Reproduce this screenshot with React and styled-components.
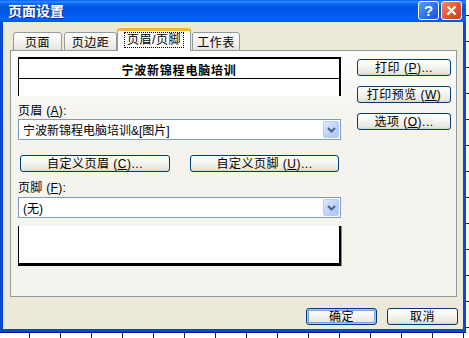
import React from 'react';
import styled, { createGlobalStyle } from 'styled-components';

const GlobalStyle = createGlobalStyle`
  html, body {
    margin: 0;
    padding: 0;
    overflow: hidden;
    background: #fff;
  }
  * {
    box-sizing: border-box;
  }
`;

const FONT = `"Liberation Sans", "Noto Sans CJK SC", sans-serif`;

const Sheet = styled.div`
  width: 469px;
  height: 338px;
  background-color: #fff;
  background-image: linear-gradient(to right, transparent 30px, #222 30px),
    linear-gradient(to bottom, transparent 25px, #222 25px);
  background-size: 31px 26px, 31px 26px;
  background-position: -1px 0, 0 -10px;
  font-family: ${FONT};
  font-size: 12px;
  color: #000;
`;

const Dialog = styled.div`
  width: 466px;
  height: 333px;
  display: flex;
  flex-direction: column;
  background: #0846d8;
  border-bottom: 1px solid #00138c;
`;

const TitleBar = styled.div`
  height: 22px;
  flex: none;
  display: flex;
  align-items: center;
  padding: 0 4px 2px 8px;
  background: linear-gradient(
    to bottom,
    #0a5ef0 0%,
    #2a8aff 8%,
    #0c6cf8 16%,
    #0058e6 30%,
    #0056e8 60%,
    #045ff2 75%,
    #0466f8 85%,
    #0057e0 100%
  );
`;

const Title = styled.div`
  flex: 1;
  color: #fff;
  font-family: "Noto Sans CJK SC", sans-serif;
  font-weight: bold;
  font-size: 14px;
  line-height: 16px;
  text-shadow: 1px 1px 0 #0a2a8a;
`;

const TitleButton = styled.div`
  width: 21px;
  height: 19px;
  margin-left: 2px;
  border: 1px solid #fff;
  border-radius: 3px;
  display: flex;
  align-items: center;
  justify-content: center;
  background: ${({ $close }) =>
    $close
      ? 'linear-gradient(135deg, #f08a6a, #e2552f 55%, #c9401b)'
      : 'linear-gradient(135deg, #5d9cff, #2a6ff0 55%, #1b55d8)'};
  color: #fff;
  font-weight: bold;
  font-size: 15px;
  line-height: 1;
`;

const Body = styled.div`
  flex: 1;
  margin: 0 3px 3px;
  background: #ece9d8;
  display: flex;
  flex-direction: column;
`;

const TabRow = styled.div`
  display: flex;
  align-items: flex-end;
  height: 29px;
  margin-bottom: -1px;
  padding-left: 10px;
  position: relative;
  z-index: 1;
`;

const Tab = styled.div`
  width: ${({ $w }) => $w}px;
  margin-left: ${({ $ml }) => $ml || 0}px;
  height: ${({ $active }) => ($active ? 23 : 19)}px;
  border: 1px solid #919b9c;
  border-bottom: ${({ $active }) => ($active ? 'none' : '1px solid #919b9c')};
  border-top: ${({ $active }) => ($active ? '3px solid #f7b33a' : '1px solid #919b9c')};
  border-radius: 3px 3px 0 0;
  background: ${({ $active }) =>
    $active ? '#fcfcfb' : 'linear-gradient(to bottom, #fefefe, #f2f1ec 60%, #e6e4da)'};
  display: flex;
  align-items: center;
  justify-content: center;
  padding-bottom: ${({ $active }) => ($active ? 2 : 0)}px;
  white-space: nowrap;
  letter-spacing: 0.5px;
`;

const Focus = styled.span`
  outline: 1px dotted #000;
  outline-offset: 0;
  padding: 0 2px;
  line-height: 14px;
`;

const Panel = styled.div`
  margin-left: 7px;
  width: 447px;
  height: 247px;
  border: 1px solid #919b9c;
  background: linear-gradient(to bottom, #fcfcfb, #f4f3ee 30%);
  display: flex;
  padding: 6px 0 0 7px;
`;

const LeftCol = styled.div`
  width: 323px;
  display: flex;
  flex-direction: column;
`;

const RightCol = styled.div`
  margin-left: 16px;
  padding-top: 2px;
  display: flex;
  flex-direction: column;
  gap: 10px;
`;

const Preview = styled.div`
  height: ${({ $h }) => $h}px;
  flex: none;
  background: #fff;
  border-left: 1px solid #000;
  border-right: 2px solid #000;
  border-top: ${({ $top }) => ($top ? '2px solid #000' : 'none')};
  border-bottom: ${({ $bottom }) => ($bottom ? '3px solid #000' : 'none')};
  box-shadow: ${({ $bottom }) => ($bottom ? '1px 0 0 #888' : 'none')};
`;

const PreviewLine = styled.div`
  height: 20px;
  border-bottom: 1px solid #000;
  display: flex;
  align-items: center;
  justify-content: center;
  font-weight: bold;
  padding-top: 1px;
  letter-spacing: 0.8px;
`;

const Label = styled.div`
  line-height: 14px;
  padding: ${({ $top }) => $top}px 0 ${({ $bottom }) => $bottom}px 0;
  letter-spacing: 0.3px;
`;

const Combo = styled.div`
  height: 21px;
  flex: none;
  border: 1px solid #7f9db9;
  background: #fff;
  display: flex;
  align-items: center;
  padding: 1px 1px 1px 4px;
`;

const ComboText = styled.div`
  flex: 1;
  white-space: nowrap;
`;

const DropButton = styled.div`
  width: 16px;
  height: 17px;
  border: 1px solid #b7cbf7;
  border-radius: 2px;
  background: linear-gradient(135deg, #dfe9ff, #bccffa 60%, #aec5f7);
  display: flex;
  align-items: center;
  justify-content: center;
`;

const Button = styled.div`
  width: ${({ $w }) => $w}px;
  height: 17px;
  flex: none;
  border: 1px solid #003c74;
  border-radius: 3px;
  background: linear-gradient(to bottom, #ffffff, #f3f3ef 50%, #e9e7de 85%, #d8d4c8);
  box-shadow: ${({ $default }) =>
    $default ? 'inset 0 0 0 1px #a9c6f7, inset 0 0 0 2px #7ba2e7' : 'none'};
  display: flex;
  align-items: center;
  justify-content: center;
  white-space: nowrap;
  letter-spacing: 0.5px;
  line-height: 14px;
`;

const ButtonRow = styled.div`
  display: flex;
  gap: ${({ $gap }) => $gap}px;
  margin-top: ${({ $mt }) => $mt}px;
  padding-left: ${({ $pl }) => $pl || 0}px;
  justify-content: ${({ $end }) => ($end ? 'flex-end' : 'flex-start')};
  padding-right: ${({ $pr }) => $pr || 0}px;
`;

const Spacer = styled.div`
  height: ${({ $h }) => $h}px;
  flex: none;
`;

const Key = styled.u`
  text-underline-offset: 1px;
`;

function Chevron() {
  return (
    <svg width="9" height="6" viewBox="0 0 9 6">
      <path d="M1 1 L4.5 4.5 L8 1" fill="none" stroke="#4d6185" strokeWidth="2" />
    </svg>
  );
}

export default function App() {
  return (
    <>
      <GlobalStyle />
      <Sheet>
        <Dialog>
          <TitleBar>
            <Title>页面设置</Title>
            <TitleButton>?</TitleButton>
            <TitleButton $close>
              <svg width="11" height="11" viewBox="0 0 11 11">
                <path d="M1.5 1.5 L9.5 9.5 M9.5 1.5 L1.5 9.5" stroke="#fff" strokeWidth="2.2" />
              </svg>
            </TitleButton>
          </TitleBar>
          <Body>
            <TabRow>
              <Tab $w={49}>页面</Tab>
              <Tab $w={53} $ml={2}>页边距</Tab>
              <Tab $w={74} $active>
                <Focus>页眉/页脚</Focus>
              </Tab>
              <Tab $w={48} $ml={1}>工作表</Tab>
            </TabRow>
            <Panel>
              <LeftCol>
                <Preview $h={39} $top>
                  <PreviewLine>宁波新锦程电脑培训</PreviewLine>
                </Preview>
                <Label $top={8} $bottom={1}>
                  页眉 (<Key>A</Key>):
                </Label>
                <Combo>
                  <ComboText>宁波新锦程电脑培训&amp;[图片]</ComboText>
                  <DropButton>
                    <Chevron />
                  </DropButton>
                </Combo>
                <ButtonRow $gap={20} $mt={15} $pl={2}>
                  <Button $w={150}>
                    自定义页眉 (<Key>C</Key>)...
                  </Button>
                  <Button $w={149}>
                    自定义页脚 (<Key>U</Key>)...
                  </Button>
                </ButtonRow>
                <Label $top={9} $bottom={2}>
                  页脚 (<Key>F</Key>):
                </Label>
                <Combo>
                  <ComboText>(无)</ComboText>
                  <DropButton>
                    <Chevron />
                  </DropButton>
                </Combo>
                <Spacer $h={8} />
                <Preview $h={40} $bottom />
              </LeftCol>
              <RightCol>
                <Button $w={94}>
                  打印 (<Key>P</Key>)...
                </Button>
                <Button $w={94}>
                  打印预览 (<Key>W</Key>)
                </Button>
                <Button $w={94}>
                  选项 (<Key>O</Key>)...
                </Button>
              </RightCol>
            </Panel>
            <ButtonRow $gap={10} $mt={11} $end $pr={5}>
              <Button $w={71} $default>确定</Button>
              <Button $w={71}>取消</Button>
            </ButtonRow>
          </Body>
        </Dialog>
      </Sheet>
    </>
  );
}
